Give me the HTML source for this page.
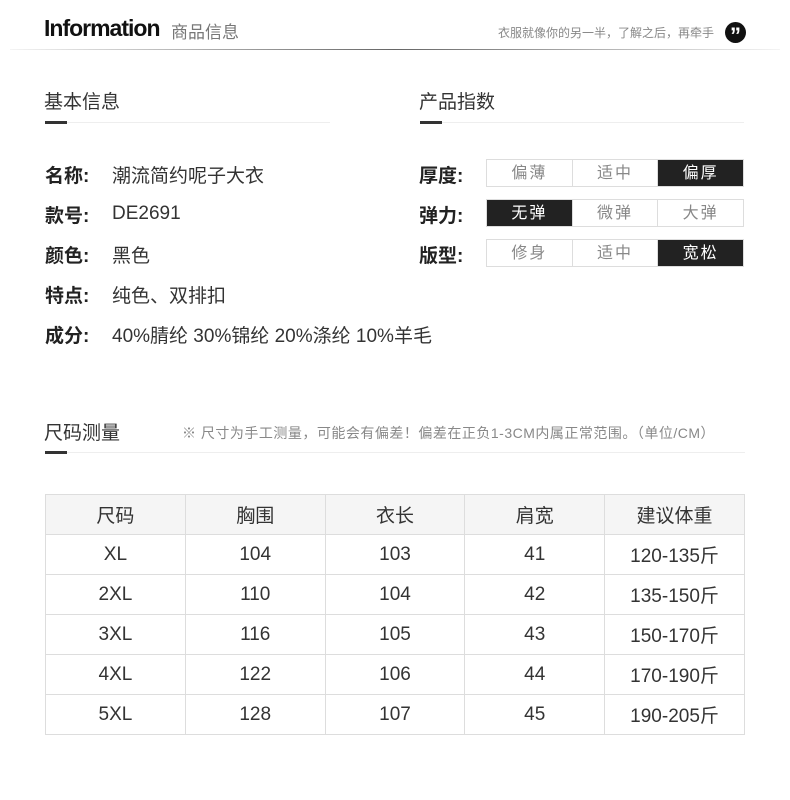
<!DOCTYPE html><html><head><meta charset="utf-8"><style>
body{margin:0;width:790px;height:800px;background:#fff;font-family:"Liberation Sans","Noto Sans CJK SC",sans-serif;color:#222;position:relative;overflow:hidden}
.a{position:absolute;white-space:nowrap}
.box{position:absolute;left:486px;width:258px;height:28px;display:flex;border:1px solid #ddd;box-sizing:border-box}
.box div{flex:1;text-align:center;line-height:28px;font-size:16px;color:#888;letter-spacing:2px;border-left:1px solid #ddd}
.box div:first-child{border-left:none}
.box .on{background:#222;color:#fff}
table{position:absolute;left:45px;top:494px;width:700px;border-collapse:collapse;font-size:19px;color:#333}
td{border:1px solid #ddd;height:39px;text-align:center;width:140px;padding:0}
tr:first-child td{background:#f5f5f5}
.lbl{font-size:19px;font-weight:bold}
.val{font-size:19px;color:#333}
</style></head><body>
<div class="a" style="left:44px;top:15px;font-size:23px;font-weight:bold;letter-spacing:-1px;color:#111">Information</div>
<div class="a" style="left:171px;top:18px;font-size:17px;color:#777">商品信息</div>
<div class="a" style="left:498px;top:24px;font-size:12px;color:#888">衣服就像你的另一半，了解之后，再牵手</div>
<div class="a" style="left:725px;top:22px;width:21px;height:21px;border-radius:50%;background:#111;color:#fff;font-size:22px;font-weight:bold;text-align:center;line-height:28px">”</div>
<div class="a" style="left:10px;top:49px;width:770px;height:1px;background:linear-gradient(90deg,#f4f4f4,#666 50%,#f4f4f4)"></div>

<div class="a" style="left:44px;top:87px;font-size:19px;color:#333">基本信息</div>
<div class="a" style="left:45px;top:122px;width:285px;height:1px;background:#eee"></div>
<div class="a" style="left:45px;top:121px;width:22px;height:3px;background:#333"></div>
<div class="a" style="left:419px;top:87px;font-size:19px;color:#333">产品指数</div>
<div class="a" style="left:420px;top:122px;width:324px;height:1px;background:#eee"></div>
<div class="a" style="left:420px;top:121px;width:22px;height:3px;background:#333"></div>

<div class="a lbl" style="left:45px;top:161px">名称:</div><div class="a val" style="left:112px;top:161px">潮流简约呢子大衣</div>
<div class="a lbl" style="left:45px;top:201px">款号:</div><div class="a val" style="left:112px;top:203px">DE2691</div>
<div class="a lbl" style="left:45px;top:241px">颜色:</div><div class="a val" style="left:112px;top:241px">黑色</div>
<div class="a lbl" style="left:45px;top:281px">特点:</div><div class="a val" style="left:112px;top:281px">纯色、双排扣</div>
<div class="a lbl" style="left:45px;top:321px">成分:</div><div class="a val" style="left:112px;top:321px">40%腈纶 30%锦纶 20%涤纶 10%羊毛</div>

<div class="a lbl" style="left:419px;top:161px">厚度:</div>
<div class="box" style="top:159px"><div>偏薄</div><div>适中</div><div class="on">偏厚</div></div>
<div class="a lbl" style="left:419px;top:201px">弹力:</div>
<div class="box" style="top:199px"><div class="on">无弹</div><div>微弹</div><div>大弹</div></div>
<div class="a lbl" style="left:419px;top:241px">版型:</div>
<div class="box" style="top:239px"><div>修身</div><div>适中</div><div class="on">宽松</div></div>

<div class="a" style="left:44px;top:418px;font-size:19px;color:#333">尺码测量</div>
<div class="a" style="left:182px;top:423px;font-size:14px;color:#888;letter-spacing:0.5px">※ 尺寸为手工测量，可能会有偏差！偏差在正负1-3CM内属正常范围。（单位/CM）</div>
<div class="a" style="left:45px;top:452px;width:700px;height:1px;background:#eee"></div>
<div class="a" style="left:45px;top:451px;width:22px;height:3px;background:#333"></div>

<table>
<tr><td>尺码</td><td>胸围</td><td>衣长</td><td>肩宽</td><td>建议体重</td></tr>
<tr><td>XL</td><td>104</td><td>103</td><td>41</td><td>120-135斤</td></tr>
<tr><td>2XL</td><td>110</td><td>104</td><td>42</td><td>135-150斤</td></tr>
<tr><td>3XL</td><td>116</td><td>105</td><td>43</td><td>150-170斤</td></tr>
<tr><td>4XL</td><td>122</td><td>106</td><td>44</td><td>170-190斤</td></tr>
<tr><td>5XL</td><td>128</td><td>107</td><td>45</td><td>190-205斤</td></tr>
</table>
</body></html>
